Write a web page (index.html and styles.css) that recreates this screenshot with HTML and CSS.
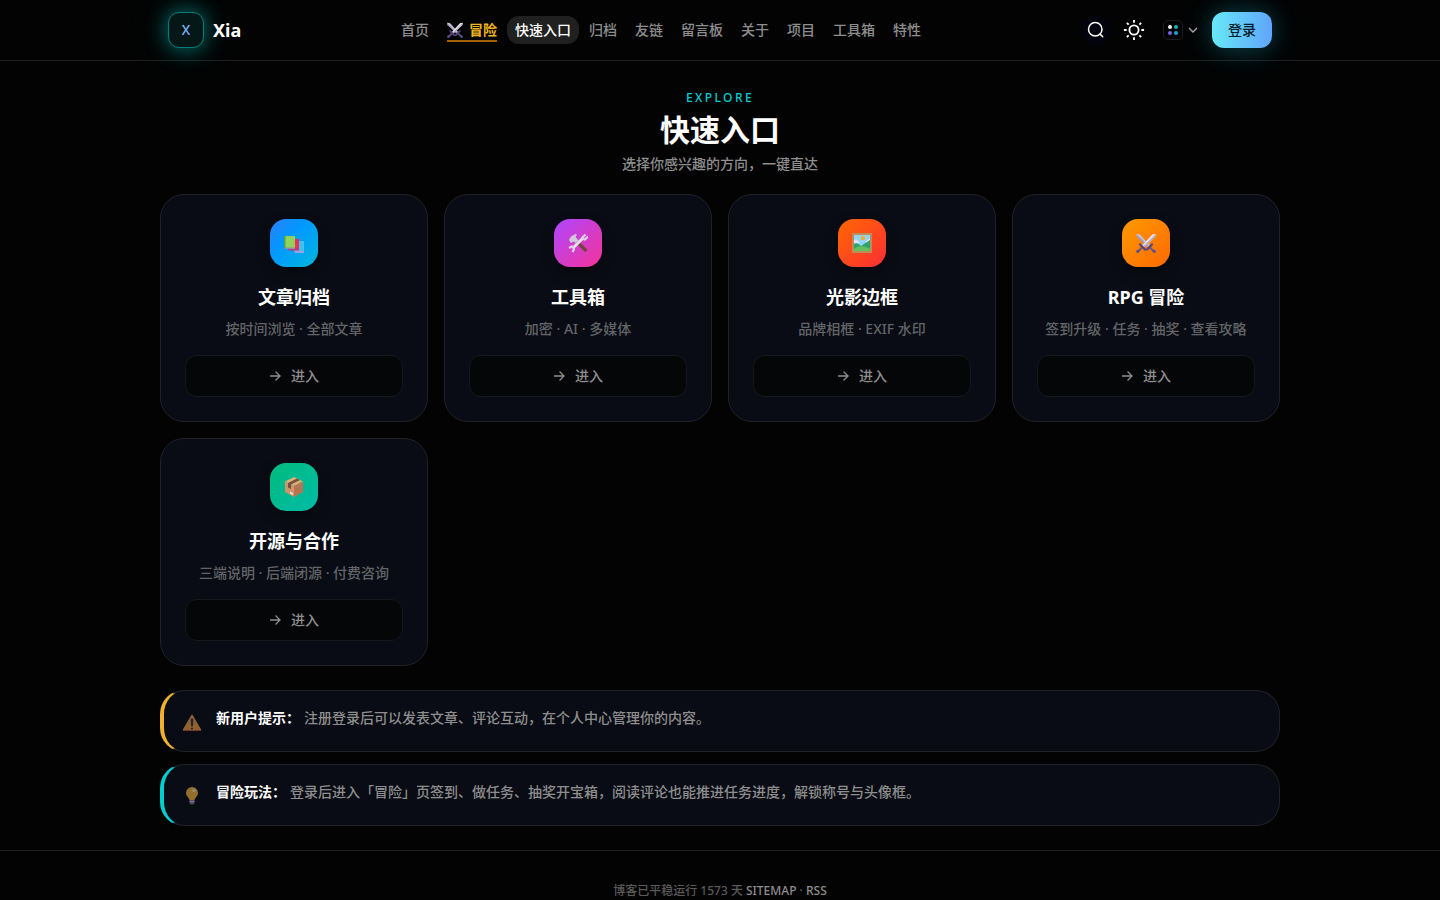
FILE: index.html
```
<!DOCTYPE html>
<html lang="zh-CN">

<head>
    <meta charset="UTF-8">
    <meta name="viewport" content="width=device-width, initial-scale=1">
    <title>快速入口 - Xia</title>
    <link rel="stylesheet" href="styles.css">
</head>

<body>
    <svg class="sprite" aria-hidden="true">
        <symbol id="swords" viewBox="0 0 20 20">
            <path d="M0 1l3.500.300L14 12.500 12 14.500 1 4z" fill="#c9c3d6"/>
            <path d="M0 1l13 12.500-1 1L1 4z" fill="#9d94b3"/>
            <path d="M20 1l-3.500.300L6 12.500 8 14.500 19 4z" fill="#e4e0ec"/>
            <path d="M20 1L7 13.500l1 1L19 4z" fill="#b3abc6"/>
            <path d="M4 11.500l5 5M16 11.500l-5 5" stroke="#54437f" stroke-width="2.200" stroke-linecap="round"/>
            <path d="M6 14.500L2 18.500M14 14.500l4 4" stroke="#6d568f" stroke-width="2"/>
            <circle cx="1.800" cy="18.300" r="1.600" fill="#5b4a94"/>
            <circle cx="18.200" cy="18.300" r="1.600" fill="#5b4a94"/>
        </symbol>
        <symbol id="books" viewBox="0 0 20 20">
            <path d="M10 8h10v10.500H10z" fill="#42c1ee"/>
            <path d="M10 18h10v2H11z" fill="#a99be0"/>
            <path d="M4 6h11v10.500H4z" fill="#ef2d55"/>
            <path d="M4 15.500h11v2H5z" fill="#c23a75"/>
            <path d="M0 3h11v12H0z" fill="#8ed35b"/>
            <path d="M0 3h1.500v12H0z" fill="#4aa653"/>
            <path d="M0 14.500h11V16H1z" fill="#8e8fa9"/>
        </symbol>
        <symbol id="tools" viewBox="0 0 20 20">
            <path d="M8 8l10.500 10" stroke="#70443f" stroke-width="3.200"/>
            <path d="M1 7l2-3.500L7.500 1l1.500.500L7.500 4l3 3.500-3 2.500-2-1.500L3 10z" fill="#d0c9da"/>
            <path d="M4.500 15.500l11-11" stroke="#e5dfee" stroke-width="3"/>
            <path d="M17.500 1.500L14.500 4.500l1 1.500 1.500.500 3-3M1 15l2.500-1.500 2 .500.500 2L4.500 19" fill="none" stroke="#d8d1e3" stroke-width="2.200"/>
        </symbol>
        <symbol id="picture" viewBox="0 0 20 20">
            <path d="M0 0h20v20H0z" fill="#bd8c5b"/>
            <path d="M2 2h16v16H2z" fill="#91d5f5"/>
            <circle cx="11" cy="5" r="2.200" fill="#f0ae38"/>
            <path d="M2 8c1-2 3-2 4 0l2 2H2zM18 6c-2 0-3 2-5 3h5z" fill="#eadff7"/>
            <path d="M2 11c3-2 5 0 7 2l9-6v11H2z" fill="#2fa36d"/>
            <path d="M2 16c5-4 11-3 16 0v2H2z" fill="#64bf5c"/>
        </symbol>
        <symbol id="package" viewBox="0 0 20 20">
            <path d="M10 0l9 4.500L10 9 1 4.500z" fill="#ddb075"/>
            <path d="M1 4.500L10 9v11l-9-5z" fill="#cf9568"/>
            <path d="M19 4.500L10 9v11l9-5z" fill="#b77653"/>
            <path d="M13 1.500L4 6v4.500l3 1.500V7.500l9-4.500z" fill="#79513f"/>
            <path d="M6 14.500l3 1.500v2l-3-1.500z" fill="#eadbe0"/>
        </symbol>
        <symbol id="warn" viewBox="0 0 20 20">
            <path d="M10 2.500L18.500 17h-17z" fill="#e99b45" stroke="#e99b45" stroke-width="1.500" stroke-linejoin="round"/>
            <path d="M1 17.500h18" stroke="#b95a3c"/>
            <path d="M9.200 6h1.600l-.300 7h-1z" fill="#3b2b45" stroke="#3b2b45"/>
            <circle cx="10" cy="15.500" r="1.100" fill="#3b2b45"/>
        </symbol>
        <symbol id="bulb" viewBox="0 0 20 20">
            <path d="M10 0a6 6 0 0 0-6 6c0 3 2.500 4 3.500 7h5c1-3 3.500-4 3.500-7a6 6 0 0 0-6-6z" fill="#edb23c"/>
            <ellipse cx="12" cy="3.500" rx="2" ry="1.500" fill="#f8df9e"/>
            <path d="M7.500 13h5v3l-1.500 1.500H9L7.500 16z" fill="#8a7a99"/>
            <path d="M7.500 14.500h5" stroke="#c4b7cf"/>
        </symbol>
        <symbol id="arrow" viewBox="0 0 12 12">
            <path d="M1 6h10M6.500 1.500L11 6l-4.500 4.500" fill="none" stroke="currentColor" stroke-width="1.300"/>
        </symbol>
    </svg>

    <header class="header">
        <div class="header-inner">
            <a class="brand" href="/">
                <span class="brand-logo"><span class="brand-letter">X</span></span>
                <span class="brand-name">Xia</span>
            </a>
            <nav class="nav">
                <a href="/">首页</a>
                <a class="adventure" href="/rpg"><svg class="nav-icon"><use href="#swords"/></svg>冒险</a>
                <a class="active" href="/explore">快速入口</a>
                <a href="/archives">归档</a>
                <a href="/links">友链</a>
                <a href="/guestbook">留言板</a>
                <a href="/about">关于</a>
                <a href="/projects">项目</a>
                <a href="/tools">工具箱</a>
                <a href="/features">特性</a>
            </nav>
            <div class="actions">
                <button class="icon-btn search" type="button" aria-label="搜索">
                    <svg width="18" height="18" viewBox="0 0 24 24" fill="none" stroke="currentColor" stroke-width="2" stroke-linecap="round"><circle cx="11" cy="11" r="9"/><path d="M17.500 17.500L21 21"/></svg>
                </button>
                <button class="icon-btn" type="button" aria-label="切换主题">
                    <svg width="22" height="22" viewBox="0 0 24 24" fill="none" stroke="currentColor" stroke-width="2"><circle cx="12" cy="12" r="5"/><path d="M12 1v3M12 20v3M4.200 4.200l2 2M17.800 17.800l2 2M1 12h3M20 12h3M4.200 19.800l2-2M17.800 6.200l2-2"/></svg>
                </button>
                <button class="palette" type="button" aria-label="主题色">
                    <span class="dots"><i class="dot white"></i><i class="dot teal"></i><i class="dot violet"></i><i class="dot cyan"></i></span>
                    <svg width="10" height="10" viewBox="0 0 10 10" fill="none" stroke="currentColor" stroke-width="1.300"><path d="M1 3l4 4 4-4"/></svg>
                </button>
                <button class="login" type="button">登录</button>
            </div>
        </div>
    </header>

    <main class="main">
        <div class="heading">
            <p class="eyebrow">EXPLORE</p>
            <h1>快速入口</h1>
            <p class="subtitle">选择你感兴趣的方向，一键直达</p>
        </div>

        <section class="cards">
            <article class="card">
                <div class="card-icon blue"><svg><use href="#books"/></svg></div>
                <h2>文章归档</h2>
                <p>按时间浏览 · 全部文章</p>
                <a class="enter" href="/archives"><svg><use href="#arrow"/></svg>进入</a>
            </article>
            <article class="card">
                <div class="card-icon purple"><svg><use href="#tools"/></svg></div>
                <h2>工具箱</h2>
                <p>加密 · AI · 多媒体</p>
                <a class="enter" href="/tools"><svg><use href="#arrow"/></svg>进入</a>
            </article>
            <article class="card">
                <div class="card-icon red"><svg><use href="#picture"/></svg></div>
                <h2>光影边框</h2>
                <p>品牌相框 · EXIF 水印</p>
                <a class="enter" href="/frame"><svg><use href="#arrow"/></svg>进入</a>
            </article>
            <article class="card">
                <div class="card-icon orange"><svg><use href="#swords"/></svg></div>
                <h2>RPG 冒险</h2>
                <p>签到升级 · 任务 · 抽奖 · 查看攻略</p>
                <a class="enter" href="/rpg"><svg><use href="#arrow"/></svg>进入</a>
            </article>
            <article class="card">
                <div class="card-icon green"><svg><use href="#package"/></svg></div>
                <h2>开源与合作</h2>
                <p>三端说明 · 后端闭源 · 付费咨询</p>
                <a class="enter" href="/projects"><svg><use href="#arrow"/></svg>进入</a>
            </article>
        </section>

        <section class="tips">
            <div class="tip warning">
                <span class="tip-icon"><svg><use href="#warn"/></svg></span>
                <p><strong>新用户提示：</strong>注册登录后可以发表文章、评论互动，在个人中心管理你的内容。</p>
            </div>
            <div class="tip info">
                <span class="tip-icon"><svg><use href="#bulb"/></svg></span>
                <p><strong>冒险玩法：</strong>登录后进入「冒险」页签到、做任务、抽奖开宝箱，阅读评论也能推进任务进度，解锁称号与头像框。</p>
            </div>
        </section>
    </main>

    <footer class="footer">
        博客已平稳运行 1573 天 <a href="/sitemap.xml">SITEMAP</a> · <a href="/rss.xml">RSS</a>
    </footer>
</body>

</html>
```
FILE: styles.css
```
* {
    box-sizing: border-box;
    margin: 0;
    padding: 0;
}

body {
    background: #030303;
    color: #fff;
    font-family: "Noto Sans", "Noto Sans CJK SC", sans-serif;
    font-size: 14px;
    line-height: 20px;
    overflow-x: hidden;
}

a {
    color: inherit;
    text-decoration: none;
}

button {
    border: 0;
    background: none;
    color: inherit;
    font: inherit;
    cursor: pointer;
}

.sprite {
    display: none;
}

/* header */
.header {
    border-bottom: 1px solid #202020;
}

.header-inner {
    display: flex;
    align-items: center;
    justify-content: space-between;
    max-width: 1120px;
    height: 60px;
    margin: 0 auto;
    padding: 0 8px;
}

.brand {
    display: flex;
    align-items: center;
    gap: 9px;
}

.brand-logo {
    display: flex;
    align-items: center;
    justify-content: center;
    width: 36px;
    height: 36px;
    border: 1px solid #067d79;
    border-radius: 11px;
    background: #051817;
    box-shadow: 0 0 20px rgba(0, 215, 210, .5), 0 0 44px rgba(0, 215, 210, .18);
}

.brand-letter {
    background: linear-gradient(120deg, #4fc8ee, #9081ee);
    background-clip: text;
    -webkit-background-clip: text;
    color: transparent;
    font-weight: 600;
}

.brand-name {
    font-size: 18px;
    font-weight: 700;
}

.nav {
    display: flex;
    gap: 2px;
    color: #8e8e8e;
    font-weight: 500;
}

.nav a {
    display: flex;
    align-items: center;
    height: 28px;
    padding: 0 8px;
    border-radius: 12px;
    white-space: nowrap;
}

.nav .active {
    background: #202020;
    color: #fff;
}

.nav .adventure {
    position: relative;
    gap: 6px;
    color: #f0b51f;
    font-weight: 700;
}

.adventure::after {
    content: "";
    position: absolute;
    right: 8px;
    bottom: 2px;
    left: 8px;
    height: 2px;
    background: #a16207;
}

.nav-icon {
    width: 16px;
    height: 16px;
}

.actions {
    display: flex;
    align-items: center;
}

.icon-btn {
    display: flex;
    align-items: center;
    justify-content: center;
    width: 30px;
    height: 30px;
    margin-right: 8px;
    border-radius: 50%;
}

.search {
    background: #02030d;
}

.palette {
    display: flex;
    align-items: center;
    gap: 5px;
    margin: 0 14px 0 6px;
    color: #aaa;
}

.dots {
    display: grid;
    grid-template-columns: 4px 4px;
    gap: 2px;
    place-content: center;
    width: 20px;
    height: 20px;
    border: 1px solid #1c1c1e;
    border-radius: 5px;
}

.dot {
    width: 4px;
    height: 4px;
    border-radius: 50%;
}

.white {
    background: #f1f1f1;
}

.teal {
    background: #14b8b0;
}

.violet {
    background: #7467e6;
}

.cyan {
    background: #18a5cf;
}

.login {
    width: 60px;
    height: 36px;
    border-radius: 12px;
    background: linear-gradient(90deg, #67e8f9, #60a5fa);
    box-shadow: 0 0 24px rgba(34, 211, 238, .25), 0 4px 40px rgba(34, 211, 238, .12);
    color: #06202b;
    font-weight: 500;
}

/* content */
.main {
    max-width: 1120px;
    margin: 0 auto;
    padding: 29px 0 24px;
}

.heading {
    margin-bottom: 20px;
    text-align: center;
}

.eyebrow {
    color: #00ced1;
    font-size: 12px;
    font-weight: 500;
    line-height: 16px;
    letter-spacing: 0.2em;
}

.heading h1 {
    margin: 6px 0;
    font-size: 30px;
    line-height: 36px;
}

.subtitle {
    color: #8e8e8e;
    font-weight: 500;
}

.cards {
    display: grid;
    grid-template-columns: repeat(4, 1fr);
    gap: 16px;
}

.card {
    display: flex;
    flex-direction: column;
    align-items: center;
    padding: 24px;
    border: 1px solid #1f2127;
    border-radius: 24px;
    background: #090c14;
}

.card-icon {
    display: flex;
    align-items: center;
    justify-content: center;
    width: 48px;
    height: 48px;
    border-radius: 16px;
    box-shadow: 0 6px 14px rgba(0, 0, 0, .3);
}

.card-icon svg {
    width: 20px;
    height: 20px;
}

.blue {
    background: linear-gradient(135deg, #2b7fff, #0099ff 40%, #00b8db);
}

.purple {
    background: linear-gradient(135deg, #ad46ff, #f6339a);
}

.red {
    background: linear-gradient(135deg, #ff6900, #fb2c36);
}

.orange {
    background: linear-gradient(135deg, #fe9a00, #ff6900);
}

.green {
    background: linear-gradient(135deg, #00bc7d, #00bba7);
}

.card h2 {
    margin: 16px 0 8px;
    font-size: 18px;
    line-height: 28px;
}

.card p {
    margin-bottom: 16px;
    color: #626468;
    font-weight: 500;
    white-space: nowrap;
}

.enter {
    display: flex;
    align-items: center;
    justify-content: center;
    gap: 10px;
    width: 100%;
    height: 42px;
    border: 1px solid #17181b;
    border-radius: 12px;
    background: #050608;
    color: #8e8e8e;
    font-weight: 500;
}

.enter svg {
    width: 12px;
    height: 12px;
}

/* tips */
.tips {
    display: grid;
    gap: 12px;
    margin-top: 24px;
}

.tip {
    display: flex;
    gap: 12px;
    padding: 16px;
    border: 1px solid #1f2127;
    border-left-width: 4px;
    border-radius: 24px;
    background: #090c14;
    color: #8e8e8e;
    font-weight: 500;
    line-height: 22px;
}

.warning {
    border-left-color: #eeb22f;
}

.info {
    border-left-color: #00ced1;
}

.tip-icon {
    display: flex;
    align-items: flex-end;
    justify-content: center;
    width: 24px;
    height: 28px;
    padding-bottom: 2px;
    opacity: .6;
}

.tip-icon svg {
    width: 20px;
    height: 20px;
}

.tip strong {
    margin-right: 4px;
    color: #fff;
}

.footer {
    padding: 32px 0;
    border-top: 1px solid #202020;
    color: #5a5a5a;
    font-size: 12px;
    font-weight: 500;
    line-height: 16px;
    text-align: center;
}

.footer a {
    color: #8e8e8e;
}
```
